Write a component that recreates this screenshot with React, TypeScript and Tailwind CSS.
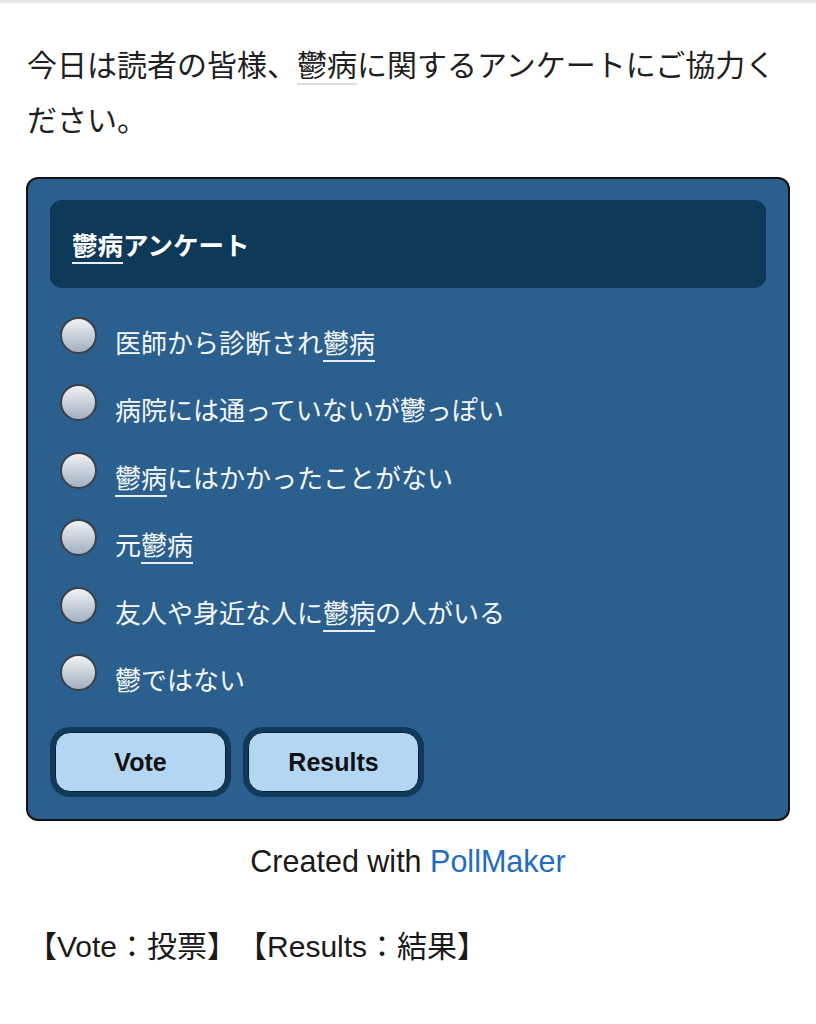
import React from "react";

const jp = { fontFamily: '"Noto Sans CJK JP", "Liberation Sans", sans-serif' };
const mix = { fontFamily: '"Liberation Sans", "Noto Sans CJK JP", sans-serif' };

function U({ children, light }: { children: React.ReactNode; light?: boolean }) {
  return (
    <span
      className={
        light
          ? "underline decoration-2 decoration-[#dcdcdc] underline-offset-[7px]"
          : "underline decoration-2 decoration-[#e8eef5] underline-offset-[7px]"
      }
    >
      {children}
    </span>
  );
}

const options: React.ReactNode[] = [
  <>医師から診断され<U>鬱病</U></>,
  <>病院には通っていないが鬱っぽい</>,
  <><U>鬱病</U>にはかかったことがない</>,
  <>元<U>鬱病</U></>,
  <>友人や身近な人に<U>鬱病</U>の人がいる</>,
  <>鬱ではない</>,
];

function Radio() {
  return (
    <div className="w-[37px] h-[37px] rounded-full border-2 border-[#3b4048] bg-linear-to-b from-[#f1f2f4] to-[#a2b0c1] shrink-0" />
  );
}

function Btn({ label }: { label: string }) {
  return (
    <div className="w-[181px] h-[70px] rounded-[20px] bg-[#10395a] p-[5px]">
      <div
        className="w-full h-full rounded-[15px] bg-[#b3d6f3] border border-[#08203a] flex items-center justify-center text-[25px] font-bold text-[#111]"
        style={{ fontFamily: '"Liberation Sans", Arial, sans-serif' }}
      >
        {label}
      </div>
    </div>
  );
}

export default function App() {
  return (
    <div className="w-[816px] h-[1024px] bg-white text-[#222] overflow-hidden">
      <div className="h-[3px] bg-[#e6e6e6]" />
      <div className="px-[27px] pt-[33px]">
        <p className="text-[30px] leading-[55px] text-[#1f1f1f]" style={jp}>
          今日は読者の皆様、<U light>鬱病</U>に関するアンケートにご協力ください。
        </p>
      </div>
      <div className="ml-[26px] mt-[31px] w-[764px] rounded-[12px] border-2 border-[#141414] bg-[#2b5f8d] px-[22px] pt-[21px] pb-[22px]">
        <div className="h-[88px] rounded-[12px] bg-[#0f3959] flex items-center pl-[22px]">
          <span className="text-[25.5px] font-bold text-white" style={jp}>
            <U>鬱病</U>アンケート
          </span>
        </div>
        <div className="mt-[29px] flex flex-col">
          {options.map((o, i) => (
            <div key={i} className="h-[67.4px] flex items-start pl-[10px]">
              <Radio />
              <div className="ml-[18px] mt-[7px] text-[26px] leading-[36px] text-[#f5f7fa]" style={jp}>
                {o}
              </div>
            </div>
          ))}
        </div>
        <div className="mt-[6px] flex gap-[12px]">
          <Btn label="Vote" />
          <Btn label="Results" />
        </div>
      </div>
      <div className="w-[816px] mt-[20px] text-center text-[30.5px] leading-[40px] text-[#1a1a1a]" style={{ fontFamily: '"Liberation Sans", Arial, sans-serif' }}>
        Created with <span className="text-[#1f6cc2]">PollMaker</span>
      </div>
      <div className="pl-[27px] mt-[46px] text-[30px] leading-[40px] text-[#1a1a1a] whitespace-pre" style={mix}>
        【Vote：投票】　【Results：結果】
      </div>
    </div>
  );
}
